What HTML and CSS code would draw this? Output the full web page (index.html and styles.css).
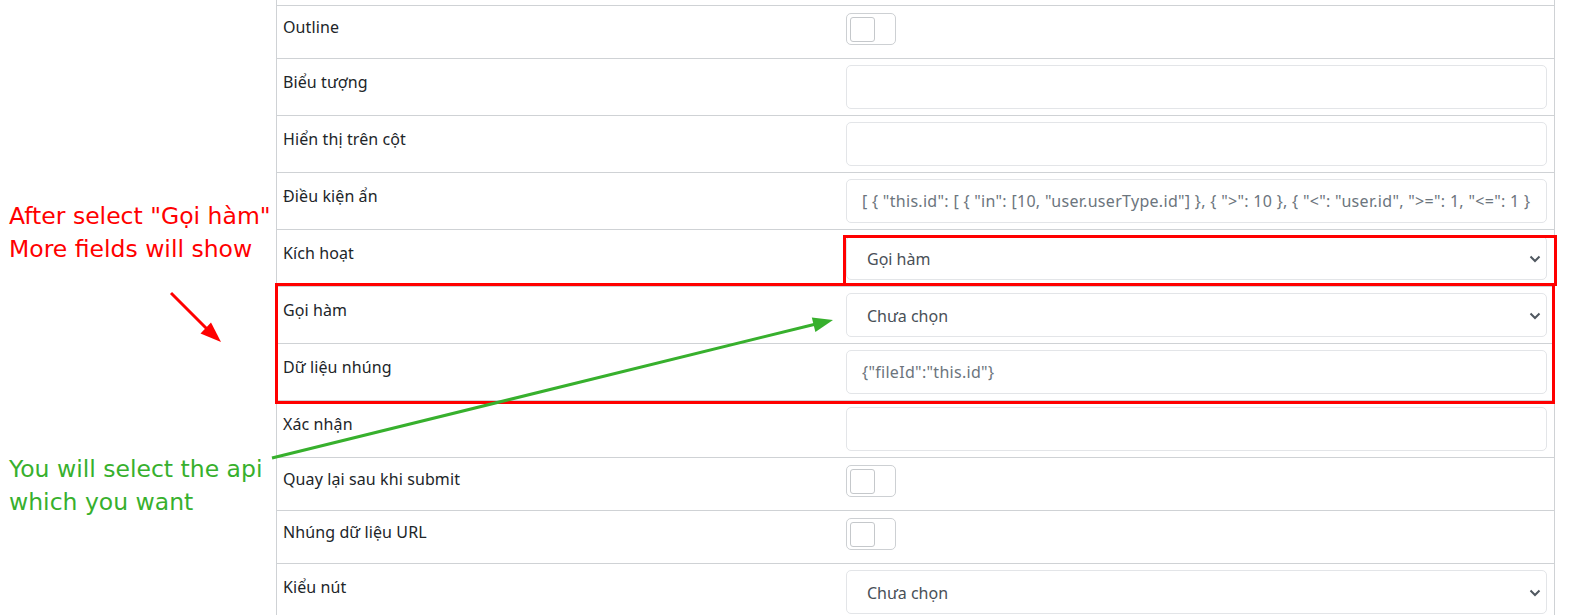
FILE: index.html
```html
<!DOCTYPE html>
<html lang="vi">
<head>
<meta charset="utf-8">
<title>Form</title>
<link rel="stylesheet" href="styles.css">
</head>
<body>
<div class="page">
  <div class="form">
    <div class="row row-partial"></div>
    <div class="row row-toggle">
      <div class="label">Outline</div>
      <div class="value"><span class="toggle"><span class="knob"></span></span></div>
    </div>
    <div class="row row-input">
      <div class="label">Biểu tượng</div>
      <div class="value"><div class="input"></div></div>
    </div>
    <div class="row row-input">
      <div class="label">Hiển thị trên cột</div>
      <div class="value"><div class="input"></div></div>
    </div>
    <div class="row row-input">
      <div class="label">Điều kiện ẩn</div>
      <div class="value"><div class="input input-muted">[ { "this.id": [ { "in": [10, "user.userType.id"] }, { "&gt;": 10 }, { "&lt;": "user.id", "&gt;=": 1, "&lt;=": 1 }</div></div>
    </div>
    <div class="row row-input">
      <div class="label">Kích hoạt</div>
      <div class="value"><div class="input select"><span>Gọi hàm</span><svg class="chev" width="12" height="8" viewBox="0 0 12 8"><path d="M1.5 1.5 L6 6 L10.5 1.5" fill="none" stroke="#505860" stroke-width="2"/></svg></div></div>
    </div>
    <div class="row row-input">
      <div class="label">Gọi hàm</div>
      <div class="value"><div class="input select"><span>Chưa chọn</span><svg class="chev" width="12" height="8" viewBox="0 0 12 8"><path d="M1.5 1.5 L6 6 L10.5 1.5" fill="none" stroke="#505860" stroke-width="2"/></svg></div></div>
    </div>
    <div class="row row-input">
      <div class="label">Dữ liệu nhúng</div>
      <div class="value"><div class="input input-muted">{"fileId":"this.id"}</div></div>
    </div>
    <div class="row row-input">
      <div class="label">Xác nhận</div>
      <div class="value"><div class="input"></div></div>
    </div>
    <div class="row row-toggle">
      <div class="label">Quay lại sau khi submit</div>
      <div class="value"><span class="toggle"><span class="knob"></span></span></div>
    </div>
    <div class="row row-toggle">
      <div class="label">Nhúng dữ liệu URL</div>
      <div class="value"><span class="toggle"><span class="knob"></span></span></div>
    </div>
    <div class="row row-input">
      <div class="label">Kiểu nút</div>
      <div class="value"><div class="input select"><span>Chưa chọn</span><svg class="chev" width="12" height="8" viewBox="0 0 12 8"><path d="M1.5 1.5 L6 6 L10.5 1.5" fill="none" stroke="#505860" stroke-width="2"/></svg></div></div>
    </div>
  </div>

  <div class="note note-red">After select "Gọi hàm"<br>More fields will show</div>
  <div class="note note-green">You will select the api<br>which you want</div>

  <div class="box box-select"></div>
  <div class="box box-rows"></div>

  <svg class="arrows" width="1569" height="615" viewBox="0 0 1569 615">
    <line x1="171" y1="293" x2="207" y2="329" stroke="#ff0000" stroke-width="3"/>
    <polygon points="221,342 200.5,333.4 211,322.6" fill="#ff0000"/>
    <line x1="272" y1="458" x2="816" y2="324" stroke="#37b02d" stroke-width="3"/>
    <polygon points="833,320 815.4,332.1 811.8,317.5" fill="#37b02d"/>
  </svg>
</div>
</body>
</html>
```

FILE: styles.css
```css
* { box-sizing: border-box; }
html, body { margin: 0; padding: 0; background: #ffffff; }
.page {
  position: relative;
  width: 1569px;
  height: 615px;
  overflow: hidden;
  font-family: "Noto Sans", "Open Sans", sans-serif;
}
.form {
  margin-left: 276px;
  width: 1279px;
  border-left: 1px solid #cfd2d5;
  border-right: 1px solid #cfd2d5;
}
.row {
  display: grid;
  grid-template-columns: 561px 1fr;
  border-top: 1px solid #cfd2d5;
}
.row-partial { height: 5px; border-top: none; }
.row-toggle { height: 53px; }
.row-input { height: 57px; }
.label {
  align-self: center;
  padding-left: 6px;
  padding-bottom: 11px;
  font-size: 16px;
  line-height: 22px;
  letter-spacing: 0.1px;
  color: #212529;
  white-space: nowrap;
}
.value { padding: 6px 7px 6px 8px; min-width: 0; }
.row-toggle .value { padding-top: 7px; }
.toggle {
  display: inline-flex;
  align-items: center;
  width: 50px;
  height: 32px;
  border: 1px solid #cdd0d3;
  border-radius: 5px;
  padding-left: 3px;
}
.knob {
  width: 25px;
  height: 25px;
  border: 1px solid #c5c8cb;
  border-radius: 3px;
}
.input {
  height: 44px;
  border: 1px solid #e3e5e8;
  border-radius: 5px;
  padding: 0 15px;
  display: flex;
  align-items: center;
  font-size: 16px;
  color: #495057;
  white-space: nowrap;
  overflow: hidden;
}
.input-muted { color: #6c757d; padding-left: 15px; letter-spacing: 0.3px; }
.select { justify-content: space-between; padding: 2px 5px 0 20px; }
.chev { flex: none; }

.note {
  position: absolute;
  left: 9px;
  font-family: "DejaVu Sans", sans-serif;
  font-size: 23.5px;
  line-height: 33px;
  white-space: nowrap;
}
.note-red { top: 200px; color: #ff0000; }
.note-green { top: 453px; color: #37b02d; }

.box {
  position: absolute;
  border: 3px solid #ff0000;
}
.box-select { left: 843px; top: 235px; width: 714px; height: 51px; }
.box-rows { left: 275px; top: 283px; width: 1280px; height: 121px; }
.arrows { position: absolute; left: 0; top: 0; pointer-events: none; }
```
